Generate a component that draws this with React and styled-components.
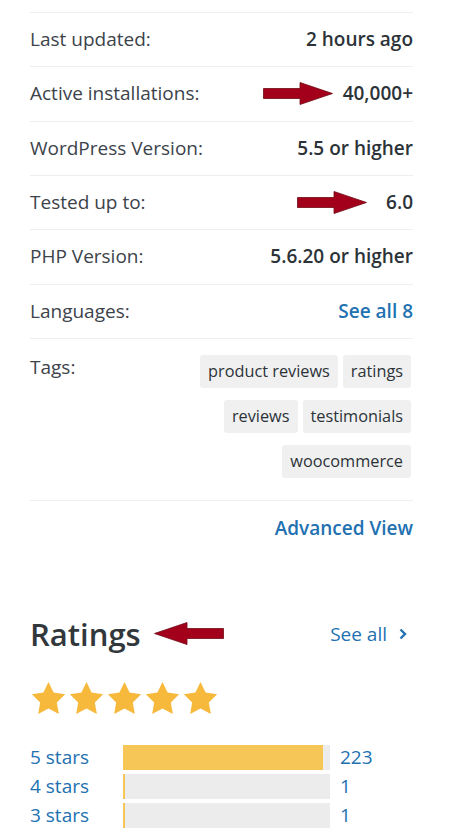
import styled, { createGlobalStyle } from 'styled-components'

const GlobalStyle = createGlobalStyle`
  html, body {
    margin: 0;
    padding: 0;
    background: #fff;
  }
  body {
    font-family: "Open Sans", "Noto Sans", "Liberation Sans", sans-serif;
    color: #3c434a;
    -webkit-font-smoothing: antialiased;
  }
`

const meta = [
  { label: 'Last updated:', value: '2 hours ago' },
  { label: 'Active installations:', value: '40,000+', arrow: 10 },
  { label: 'WordPress Version:', value: '5.5 or higher' },
  { label: 'Tested up to:', value: '6.0', arrow: 19 },
  { label: 'PHP Version:', value: '5.6.20 or higher' },
  { label: 'Languages:', value: 'See all 8', link: true },
]

const tags = ['product reviews', 'ratings', 'reviews', 'testimonials', 'woocommerce']

const ratings = [
  { label: '5 stars', count: 223, pct: 96.6 },
  { label: '4 stars', count: 1, pct: 0.9 },
  { label: '3 stars', count: 1, pct: 0.9 },
]

function Arrow({ left, gap }) {
  return (
    <ArrowSvg viewBox="0 0 70 23" $left={left} $gap={gap}>
      <polygon
        points="0.5,6.5 37,6.5 37,0.5 69.5,11.5 37,22.5 37,16.5 0.5,16.5"
        fill="#a3001c"
        stroke="#6e0a14"
        strokeWidth="0.8"
      />
    </ArrowSvg>
  )
}

function Star() {
  return (
    <svg width="35" height="34" viewBox="0 0 24 23">
      <path
        d="M12 0.6l3.5 7.2 7.9 1.1-5.7 5.6 1.4 7.9L12 18.7l-7.1 3.7 1.4-7.9L0.6 8.9l7.9-1.1z"
        fill="#f6b93c"
      />
    </svg>
  )
}

export default function App() {
  return (
    <Page>
      <GlobalStyle />
      <MetaList>
        {meta.map((row) => (
          <Row key={row.label}>
            <Label>{row.label}</Label>
            <Value $link={row.link}>
              {row.arrow && <Arrow gap={row.arrow} />}
              {row.value}
            </Value>
          </Row>
        ))}
        <TagRow>
          <Label>Tags:</Label>
          <TagList>
            {tags.map((t) => (
              <Tag key={t}>{t}</Tag>
            ))}
          </TagList>
        </TagRow>
      </MetaList>

      <AdvancedLink>Advanced View</AdvancedLink>

      <RatingsHeader>
        <Heading>
          Ratings
          <Arrow left gap={13} />
        </Heading>
        <SeeAll>
          See all
          <svg width="10" height="12" viewBox="0 0 10 12">
            <path d="M2.5 1.5L7 6l-4.5 4.5" fill="none" stroke="#2271b1" strokeWidth="2.4" />
          </svg>
        </SeeAll>
      </RatingsHeader>

      <Stars>
        {[0, 1, 2, 3, 4].map((i) => (
          <Star key={i} />
        ))}
      </Stars>

      <Bars>
        {ratings.map((r) => (
          <BarRow key={r.label}>
            <BarLabel>{r.label}</BarLabel>
            <Track>
              <Fill style={{ width: `${r.pct}%` }} />
            </Track>
            <Count>{r.count}</Count>
          </BarRow>
        ))}
      </Bars>
    </Page>
  )
}

const Page = styled.div`
  width: 383px;
  padding: 12px 0 0 30px;
`

const MetaList = styled.ul`
  list-style: none;
  margin: 0;
  padding: 0;
  border-bottom: 1px solid #eeeeee;
`

const Row = styled.li`
  display: flex;
  justify-content: space-between;
  align-items: center;
  border-top: 1px solid #eeeeee;
  padding: 13px 0;
  font-size: 19px;
  line-height: 27.33px;
`

const TagRow = styled(Row)`
  align-items: flex-start;
  padding: 15px 0 22px;
`

const Label = styled.span`
  color: #3c434a;
`

const Value = styled.span`
  display: flex;
  align-items: center;
  font-weight: 600;
  color: ${(p) => (p.$link ? '#2271b1' : '#2c3338')};
`

const ArrowSvg = styled.svg`
  width: 70px;
  height: 23px;
  flex-shrink: 0;
  ${(p) =>
    p.$left
      ? `transform: scaleX(-1); margin-left: ${p.$gap}px;`
      : `margin-right: ${p.$gap}px;`}
`

const TagList = styled.div`
  width: 232px;
  margin: 1px 2px 0 0;
  display: flex;
  flex-wrap: wrap;
  justify-content: flex-end;
  gap: 12px 5px;
`

const Tag = styled.span`
  background: #f0f0f1;
  border-radius: 3px;
  padding: 0 8px;
  height: 33px;
  line-height: 33px;
  font-size: 16.3px;
  color: #2c3338;
  white-space: nowrap;
`

const AdvancedLink = styled.a`
  display: block;
  text-align: right;
  margin-top: 13px;
  font-size: 19px;
  line-height: 28px;
  font-weight: 600;
  color: #2271b1;
`

const RatingsHeader = styled.div`
  display: flex;
  justify-content: space-between;
  align-items: center;
  margin-top: 72px;
`

const Heading = styled.h2`
  display: flex;
  align-items: center;
  margin: 0;
  font-size: 31px;
  line-height: 40px;
  font-weight: 600;
  color: #32373c;
`

const SeeAll = styled.a`
  display: flex;
  align-items: center;
  gap: 11px;
  margin-right: 5px;
  font-size: 19px;
  line-height: 28px;
  color: #2271b1;
`

const Stars = styled.div`
  display: flex;
  gap: 3px;
  margin-top: 27px;
  margin-left: 1px;
`

const Bars = styled.div`
  display: flex;
  flex-direction: column;
  gap: 4px;
  margin-top: 30px;
`

const BarRow = styled.div`
  display: flex;
  align-items: center;
  font-size: 19px;
  line-height: 25px;
  color: #2271b1;
`

const BarLabel = styled.span`
  width: 93px;
`

const Track = styled.div`
  width: 207px;
  height: 25px;
  background: #ececec;
`

const Fill = styled.div`
  height: 100%;
  background: #f6c757;
`

const Count = styled.span`
  margin-left: 10px;
`
